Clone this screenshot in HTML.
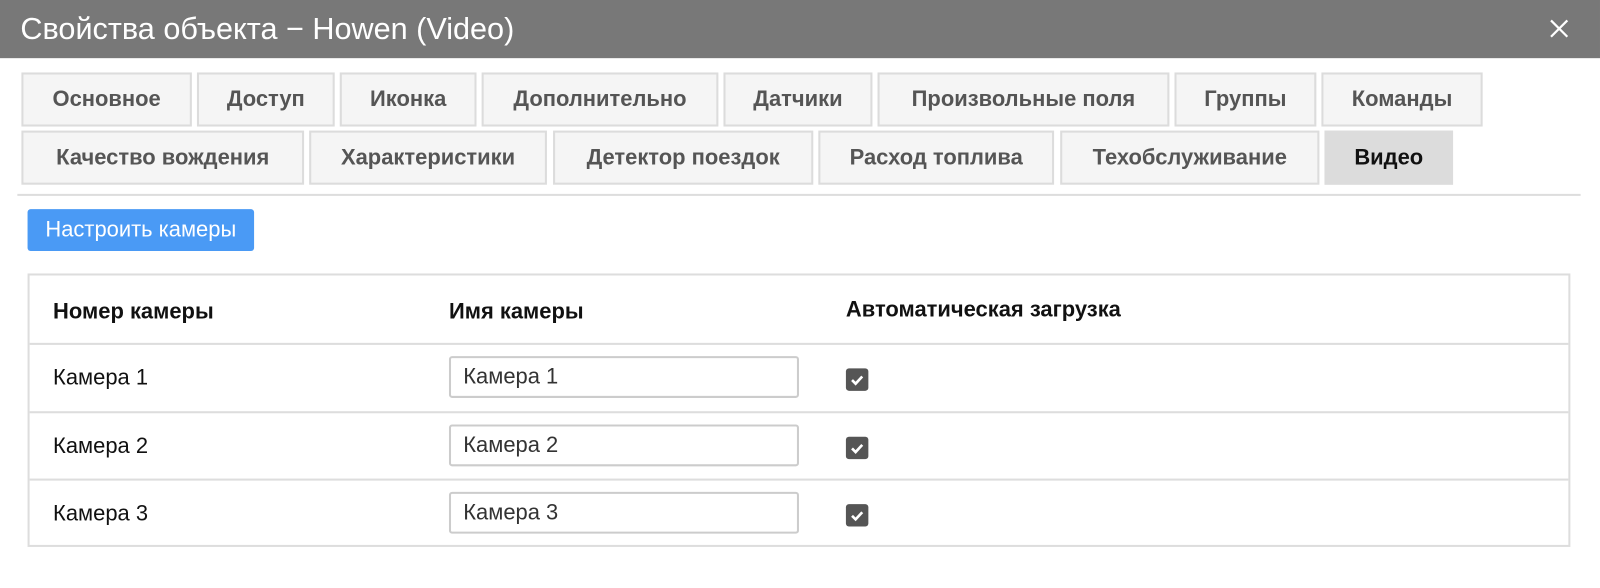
<!DOCTYPE html>
<html><head><meta charset="utf-8"><style>
*{box-sizing:border-box;margin:0;padding:0}
body{width:1600px;height:588px;background:#fff;font-family:"Liberation Sans",Arial,sans-serif;position:relative;overflow:hidden}
.wrap{position:absolute;left:0;top:0;width:1568px;height:576px;transform:scale(1.0204);transform-origin:0 0}
.hdr{position:absolute;left:0;top:0;width:1568px;height:57px;background:#787878;color:#fff;font-size:30px;line-height:57px;padding-left:20px}
.x{position:absolute;left:1518px;top:18px;width:20px;height:20px}
.tab{position:absolute;height:53px;background:#f5f5f5;border:2px solid #dcdcdc;color:#555;font-weight:bold;font-size:21.5px;display:flex;align-items:center;justify-content:center;white-space:nowrap}
.tab.a{background:#dcdcdc;color:#111;border-color:#dcdcdc}
.sep{position:absolute;left:17px;top:190px;width:1532px;height:2px;background:#ddd}
.btn{position:absolute;left:27px;top:205px;width:222px;height:41px;background:#4a9af5;border-radius:3px;color:#fff;font-size:21.5px;line-height:41px;text-align:center;white-space:nowrap}
.tbl{position:absolute;left:27px;top:268px;width:1512px;height:268px;border:2px solid #ddd}
.row{position:absolute;left:0;width:100%;border-top:2px solid #ddd}
.t{position:absolute;font-size:21.5px;color:#111}
.b{font-weight:bold}
.inp{position:absolute;left:411px;width:343px;height:41px;border:2px solid #ccc;border-radius:3px;font-size:21.5px;color:#333;padding-left:12px;line-height:37px}
.cb{position:absolute;left:800px;width:22px;height:22px;background:#555;border-radius:3px}
</style></head><body><div class="wrap">
<div class="hdr">Свойства объекта − Howen (Video)</div>
<svg class="x" viewBox="0 0 20 20"><path d="M2 2L18 18M18 2L2 18" stroke="#fff" stroke-width="2.2"/></svg>
<div class="tab" style="left:21px;top:71px;width:167px">Основное</div>
<div class="tab" style="left:193px;top:71px;width:135px">Доступ</div>
<div class="tab" style="left:333px;top:71px;width:134px">Иконка</div>
<div class="tab" style="left:472px;top:71px;width:232px">Дополнительно</div>
<div class="tab" style="left:709px;top:71px;width:146px">Датчики</div>
<div class="tab" style="left:860px;top:71px;width:286px">Произвольные поля</div>
<div class="tab" style="left:1151px;top:71px;width:139px">Группы</div>
<div class="tab" style="left:1295px;top:71px;width:158px">Команды</div>
<div class="tab" style="left:21px;top:128px;width:277px">Качество вождения</div>
<div class="tab" style="left:303px;top:128px;width:233px">Характеристики</div>
<div class="tab" style="left:542px;top:128px;width:255px">Детектор поездок</div>
<div class="tab" style="left:802px;top:128px;width:231px">Расход топлива</div>
<div class="tab" style="left:1039px;top:128px;width:254px">Техобслуживание</div>
<div class="tab a" style="left:1298px;top:128px;width:126px">Видео</div>
<div class="sep"></div>
<div class="btn">Настроить камеры</div>
<div class="tbl">
<div class="t b" style="left:23px;top:23px">Номер камеры</div>
<div class="t b" style="left:411px;top:23px">Имя камеры</div>
<div class="t b" style="left:800px;top:21px">Автоматическая загрузка</div>
<div class="row" style="top:66px;height:67px">
<div class="t" style="left:23px;top:20px">Камера 1</div><div class="inp" style="top:11px">Камера 1</div>
<svg class="cb" style="top:23px" viewBox="0 0 22 22"><path d="M6 11.5l3.5 3.5L16 8" stroke="#fff" stroke-width="2.6" fill="none"/></svg></div>
<div class="row" style="top:133px;height:67px">
<div class="t" style="left:23px;top:20px">Камера 2</div><div class="inp" style="top:11px">Камера 2</div>
<svg class="cb" style="top:23px" viewBox="0 0 22 22"><path d="M6 11.5l3.5 3.5L16 8" stroke="#fff" stroke-width="2.6" fill="none"/></svg></div>
<div class="row" style="top:199px;height:67px">
<div class="t" style="left:23px;top:20px">Камера 3</div><div class="inp" style="top:11px">Камера 3</div>
<svg class="cb" style="top:23px" viewBox="0 0 22 22"><path d="M6 11.5l3.5 3.5L16 8" stroke="#fff" stroke-width="2.6" fill="none"/></svg></div>
</div>
</div></body></html>
